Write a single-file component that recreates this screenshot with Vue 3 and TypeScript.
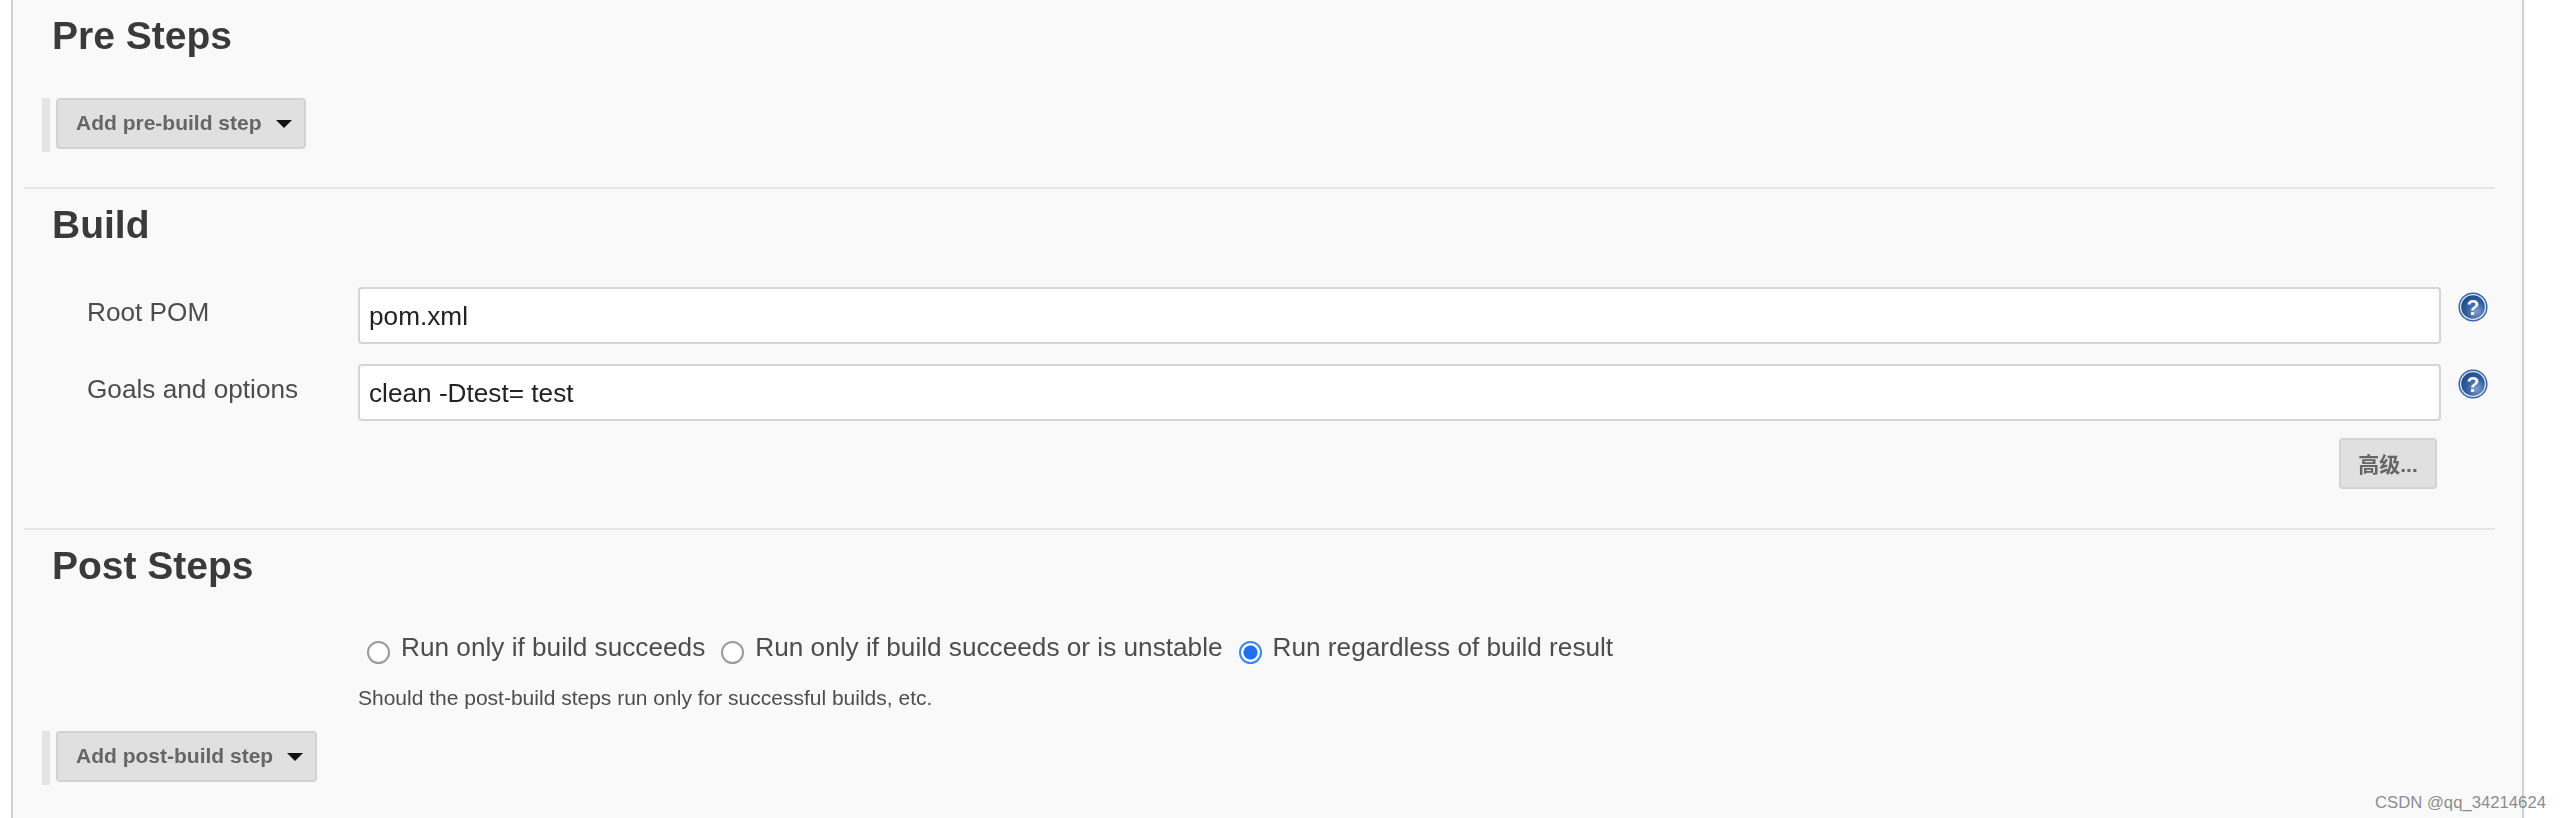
<script setup lang="ts">
interface FieldRow {
  label: string
  value: string
}

interface RunOption {
  label: string
  checked: boolean
}

const buildFields: FieldRow[] = [
  { label: 'Root POM', value: 'pom.xml' },
  { label: 'Goals and options', value: 'clean -Dtest= test' },
]

const runOptions: RunOption[] = [
  { label: 'Run only if build succeeds', checked: false },
  { label: 'Run only if build succeeds or is unstable', checked: false },
  { label: 'Run regardless of build result', checked: true },
]
</script>

<template>
  <div class="page">
    <main class="panel">
      <section class="section section-pre">
        <h2 class="title">Pre Steps</h2>
        <div class="step-bar">
          <button type="button" class="btn btn-menu">
            Add pre-build step
            <span class="caret" />
          </button>
        </div>
      </section>

      <section class="section section-build">
        <h2 class="title">Build</h2>
        <div class="fields">
          <div v-for="field in buildFields" :key="field.label" class="field">
            <label class="field-label">{{ field.label }}</label>
            <input class="field-input" type="text" :value="field.value" />
            <svg class="help" viewBox="0 0 28 28" aria-hidden="true">
              <defs>
                <radialGradient :id="`help-${field.value.length}`" cx="65%" cy="70%" r="75%">
                  <stop offset="0%" stop-color="#7f9fcc" />
                  <stop offset="55%" stop-color="#34609f" />
                  <stop offset="100%" stop-color="#1f4a8c" />
                </radialGradient>
              </defs>
              <circle cx="14" cy="14" r="13.6" fill="#3a66a8" />
              <circle cx="14" cy="14" r="12.2" fill="#e3e9f3" />
              <circle cx="14" cy="14" r="11" :fill="`url(#help-${field.value.length})`" />
              <text x="14" y="21" text-anchor="middle" class="help-mark">?</text>
            </svg>
          </div>
        </div>
        <div class="advanced-row">
          <button type="button" class="btn btn-advanced">高级...</button>
        </div>
      </section>

      <section class="section section-post">
        <h2 class="title">Post Steps</h2>
        <div class="run-options">
          <label v-for="option in runOptions" :key="option.label" class="run-option">
            <input class="radio" type="radio" name="run-post" :checked="option.checked" />
            <span>{{ option.label }}</span>
          </label>
        </div>
        <p class="hint">Should the post-build steps run only for successful builds, etc.</p>
        <div class="step-bar">
          <button type="button" class="btn btn-menu">
            Add post-build step
            <span class="caret" />
          </button>
        </div>
      </section>
    </main>
    <span class="watermark">CSDN @qq_34214624</span>
  </div>
</template>

<style>
html,
body {
  margin: 0;
  background: #fff;
}
</style>

<style scoped>
.page {
  position: relative;
  width: 2560px;
  height: 818px;
  overflow: hidden;
  background: #fff;
  font-family: "Liberation Sans", Arial, "Noto Sans CJK SC", sans-serif;
}

.panel {
  box-sizing: border-box;
  width: 2513px;
  height: 818px;
  margin-left: 11px;
  padding: 0 27px 0 11px;
  background: #f9f9f9;
  border-left: 2px solid #d0d0d0;
  border-right: 2px solid #d0d0d0;
  filter: blur(0.6px);
}

.section {
  box-sizing: border-box;
  padding-left: 29px;
}

.section-pre {
  height: 187px;
  padding-top: 14px;
}

.section-build {
  height: 341px;
  padding-top: 14px;
  border-top: 2px solid #e6e6e6;
}

.section-post {
  padding-top: 14px;
  border-top: 2px solid #e6e6e6;
}

.title {
  margin: 0 0 0 -1px;
  font-size: 39px;
  line-height: 44px;
  font-weight: 700;
  color: #3a3a3a;
}

.step-bar {
  display: flex;
  width: max-content;
  height: 54px;
  margin: 40px 0 0 -11px;
  padding-left: 6px;
  border-left: 8px solid #e4e4e4;
}

.btn {
  box-sizing: border-box;
  display: inline-flex;
  align-items: center;
  height: 51px;
  padding-bottom: 3px;
  background: #e0e0e0;
  border: 2px solid #d2d2d2;
  border-radius: 4px;
  color: #666;
  font-family: inherit;
  font-size: 21px;
  font-weight: 700;
}

.btn-menu {
  padding-left: 18px;
  padding-right: 12px;
}

.caret {
  width: 0;
  height: 0;
  margin-left: 14px;
  margin-top: 3px;
  border-left: 8px solid transparent;
  border-right: 8px solid transparent;
  border-top: 8px solid #111;
}

.fields {
  display: flex;
  flex-direction: column;
  gap: 20px;
  margin-top: 40px;
}

.field {
  display: grid;
  grid-template-columns: 305px 2083px 33px;
  align-items: start;
}

.field-label {
  padding: 10px 0 0 34px;
  font-size: 26.2px;
  line-height: 30px;
  color: #4d4d4d;
}

.field-input {
  box-sizing: border-box;
  height: 57px;
  width: 100%;
  padding: 2px 9px 0;
  background: #fff;
  border: 2px solid #d4d4d4;
  border-radius: 4px;
  outline: none;
  font-family: inherit;
  font-size: 26.2px;
  color: #222;
}

.help {
  width: 30px;
  height: 30px;
  margin: 5px 0 0 17px;
}

.help-mark {
  font-family: "Liberation Sans", Arial, sans-serif;
  font-size: 20px;
  font-weight: 700;
  fill: #f2f5fa;
}

.advanced-row {
  display: flex;
  justify-content: flex-end;
  margin: 17px 58px 0 0;
}

.btn-advanced {
  justify-content: center;
  width: 98px;
}

.run-options {
  display: flex;
  gap: 16px;
  margin: 44px 0 0 314px;
}

.run-option {
  display: flex;
  align-items: flex-start;
  gap: 11px;
  font-size: 26.2px;
  line-height: 30px;
  color: #4d4d4d;
}

.radio {
  appearance: none;
  box-sizing: border-box;
  flex: none;
  width: 23px;
  height: 23px;
  margin: 9px 0 0;
  background: #fff;
  border: 2px solid #9a9a9a;
  border-radius: 50%;
}

.radio:checked {
  border-color: #3b86f7;
  background: radial-gradient(circle, #1f6ff5 0 6.5px, #fff 7.5px);
}

.hint {
  margin: 21px 0 0 305px;
  font-size: 21px;
  line-height: 26px;
  color: #4d4d4d;
}

.section-post .step-bar {
  margin-top: 20px;
}

.watermark {
  position: absolute;
  left: 2375px;
  top: 793px;
  font-size: 16.7px;
  line-height: 20px;
  color: rgba(110, 110, 110, 0.8);
}
</style>
